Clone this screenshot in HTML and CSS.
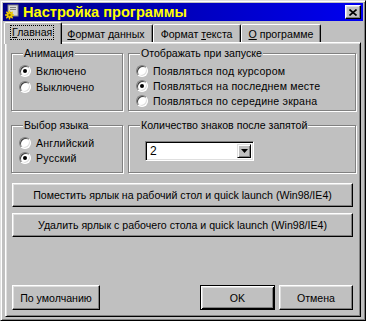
FILE: index.html
```html
<!DOCTYPE html>
<html lang="ru">
<head>
  <meta charset="UTF-8" />
  <title>Настройка программы</title>
  <link rel="stylesheet" href="styles.css">
</head>
<body>

  <div class="window">
    <div class="titlebar">
      <svg class="app-icon" width="16" height="16" viewBox="0 0 16 16">
        <rect x="4" y="1" width="10" height="11" fill="#d8d8d8" stroke="#808080"/>
        <rect x="6" y="3" width="6" height="1" fill="#808080"/>
        <rect x="6" y="5" width="6" height="1" fill="#808080"/>
        <g fill="#f0c000" stroke="#806000" stroke-width="0.6">
          <circle cx="5.5" cy="11" r="3"/>
        </g>
        <g stroke="#f0d000" stroke-width="1.4">
          <line x1="5.5" y1="6.5" x2="5.5" y2="15.5"/>
          <line x1="1" y1="11" x2="10" y2="11"/>
          <line x1="2.3" y1="7.8" x2="8.7" y2="14.2"/>
          <line x1="8.7" y1="7.8" x2="2.3" y2="14.2"/>
        </g>
        <circle cx="5.5" cy="11" r="1.2" fill="#806000"/>
      </svg>
      <span class="title">Настройка программы</span>
      <div class="close-btn">
        <svg width="8" height="7" viewBox="0 0 8 7">
          <path d="M0.5 0.5 L7.5 6.5 M7.5 0.5 L0.5 6.5" stroke="#000" stroke-width="1.6"/>
        </svg>
      </div>
    </div>

    <div class="tabs">
      <div class="tab active"><span class="focus"><u>Г</u>лавная</span></div>
      <div class="tab"><span><u>Ф</u>ормат данных</span></div>
      <div class="tab"><span>Формат <u>т</u>екста</span></div>
      <div class="tab"><span><u>О</u> программе</span></div>
    </div>

    <div class="panel">
      <div class="group-row row-top">
        <fieldset class="group group-left">
          <legend>Анимация</legend>
          <div class="radio-list loose">
            <div class="radio-row"><span class="radio checked"></span>Включено</div>
            <div class="radio-row"><span class="radio"></span>Выключено</div>
          </div>
        </fieldset>
        <fieldset class="group group-right">
          <legend>Отображать при запуске</legend>
          <div class="radio-list">
            <div class="radio-row"><span class="radio"></span>Появляться под курсором</div>
            <div class="radio-row"><span class="radio checked"></span>Появляться на последнем месте</div>
            <div class="radio-row"><span class="radio"></span>Появляться по середине экрана</div>
          </div>
        </fieldset>
      </div>

      <div class="group-row row-bottom">
        <fieldset class="group group-left">
          <legend>Выбор языка</legend>
          <div class="radio-list">
            <div class="radio-row"><span class="radio"></span>Английский</div>
            <div class="radio-row"><span class="radio checked"></span>Русский</div>
          </div>
        </fieldset>
        <fieldset class="group group-right">
          <legend>Количество знаков после запятой</legend>
          <div class="combo">
            <span class="combo-value">2</span>
            <span class="combo-arrow">
              <svg width="7" height="4" viewBox="0 0 7 4"><path d="M0 0 H7 L3.5 4 Z" fill="#000"/></svg>
            </span>
          </div>
        </fieldset>
      </div>

      <button class="btn wide first">Поместить ярлык на рабочий стол и quick launch (Win98/IE4)</button>
      <button class="btn wide">Удалить ярлык с рабочего стола и quick launch (Win98/IE4)</button>

      <div class="footer">
        <button class="btn btn-defaults">По умолчанию</button>
        <div class="footer-right">
          <button class="btn btn-ok default">OK</button>
          <button class="btn btn-cancel">Отмена</button>
        </div>
      </div>
    </div>
  </div>

</body>
</html>
```

FILE: styles.css
```css
* {
  box-sizing: border-box;
}

body {
  margin: 0;
  background-color: #c0c0c0;
  font-family: 'Liberation Sans', Arial, sans-serif;
  font-size: 10.6px;
  color: #000;
}

.window {
  width: 366px;
  height: 321px;
  display: flex;
  flex-direction: column;
  padding: 2px;
  background-color: #c0c0c0;
  border: 1px solid;
  border-color: #dfdfdf #000 #000 #dfdfdf;
  box-shadow: inset 1px 1px #fff, inset -1px -1px #808080;
}

/* title bar */
.titlebar {
  height: 18px;
  display: flex;
  align-items: center;
  padding: 0 2px 0 1px;
  background: linear-gradient(to right, #000088, #0000f0);
}

.app-icon {
  flex: none;
}

.title {
  flex: 1;
  margin-left: 3px;
  color: #ffff00;
  font-weight: bold;
  font-size: 14.6px;
}

.close-btn {
  width: 16px;
  height: 14px;
  display: flex;
  align-items: center;
  justify-content: center;
  background-color: #c0c0c0;
  border: 1px solid;
  border-color: #fff #000 #000 #fff;
  box-shadow: inset -1px -1px #808080, inset 1px 1px #dfdfdf;
}

/* tabs */
.tabs {
  height: 20px;
  margin-top: 1px;
  padding-left: 3px;
  display: flex;
  align-items: flex-end;
}

.tab {
  height: 18px;
  padding: 0 7px;
  display: flex;
  align-items: center;
  white-space: pre;
  background-color: #c0c0c0;
  border: 1px solid;
  border-bottom: none;
  border-color: #fff #000 transparent #fff;
  border-radius: 2px 2px 0 0;
  box-shadow: inset -1px 0 #808080;
}

.tab.active {
  height: 22px;
  margin: 0 -2px -2px;
  padding: 0 7px 2px 5px;
  position: relative;
  z-index: 2;
}

.tab.active + .tab {
  border-left: none;
}

.focus {
  padding: 0 1px;
  border: 1px dotted #000;
  line-height: 13px;
}

/* page */
.panel {
  flex: 1;
  margin: 0 2px 1px 2px;
  padding: 4px 4px 6px 5px;
  display: flex;
  flex-direction: column;
  border: 1px solid;
  border-color: #fff #000 #000 #fff;
  box-shadow: inset 1px 1px #dfdfdf, inset -1px -1px #808080;
}

.group-row {
  display: flex;
  gap: 5px;
}

.group {
  margin: 0;
  padding: 0 6px 0 7px;
  border: 1px solid #808080;
  box-shadow: 1px 1px 0 #fff, inset 1px 1px 0 #fff;
}

.group legend {
  margin-left: 4px;
  padding: 0 1px;
  line-height: 13px;
  background-color: #c0c0c0;
}

.group-left {
  width: 112px;
}

.group-right {
  width: 228px;
}

.row-top .group {
  height: 64px;
}

.row-bottom {
  margin-top: 8px;
}

.row-bottom .group {
  height: 54px;
}

.radio-list {
  padding-top: 3px;
}

.radio-row {
  height: 15px;
  display: flex;
  align-items: center;
  gap: 5px;
  letter-spacing: 0.2px;
}

.loose .radio-row {
  height: 16px;
}

.radio {
  width: 12px;
  height: 12px;
  flex: none;
  display: flex;
  align-items: center;
  justify-content: center;
  border-radius: 50%;
  background-color: #fff;
  border: 1px solid;
  border-color: #808080 #fff #fff #808080;
  box-shadow: inset 1px 1px #404040, inset -1px -1px #dfdfdf;
}

.radio.checked::after {
  content: "";
  width: 4px;
  height: 4px;
  border-radius: 50%;
  background-color: #000;
}

/* combobox */
.combo {
  width: 109px;
  height: 20px;
  margin: 9px 0 0 9px;
  display: flex;
  align-items: center;
  padding: 2px;
  background-color: #fff;
  border: 1px solid;
  border-color: #808080 #fff #fff #808080;
  box-shadow: inset 1px 1px #000, inset -1px -1px #dfdfdf;
}

.combo-value {
  flex: 1;
  padding-left: 2px;
  font-size: 12px;
}

.combo-arrow {
  width: 14px;
  height: 14px;
  display: flex;
  align-items: center;
  justify-content: center;
  background-color: #c0c0c0;
  border: 1px solid;
  border-color: #dfdfdf #000 #000 #dfdfdf;
  box-shadow: inset 1px 1px #fff, inset -1px -1px #808080;
}

/* buttons */
.btn {
  font-family: inherit;
  font-size: inherit;
  color: #000;
  padding: 0;
  background-color: #c0c0c0;
  border: 1px solid;
  border-color: #fff #000 #000 #fff;
  box-shadow: inset -1px -1px #808080, inset 1px 1px #dfdfdf;
}

.btn.wide {
  height: 24px;
  margin: 6px 3px 0 1px;
}

.btn.wide.first {
  margin-top: 10px;
}

.btn.default {
  border-color: #000;
  box-shadow: inset 1px 1px #fff, inset -1px -1px #000, inset 2px 2px #dfdfdf, inset -2px -2px #808080;
}

.footer {
  margin-top: auto;
  padding: 0 3px 0 1px;
  display: flex;
  justify-content: space-between;
}

.footer .btn {
  height: 25px;
}

.footer-right {
  display: flex;
  gap: 4px;
}

.btn-defaults {
  width: 88px;
}

.btn-ok {
  width: 75px;
}

.btn-cancel {
  width: 74px;
}
```
